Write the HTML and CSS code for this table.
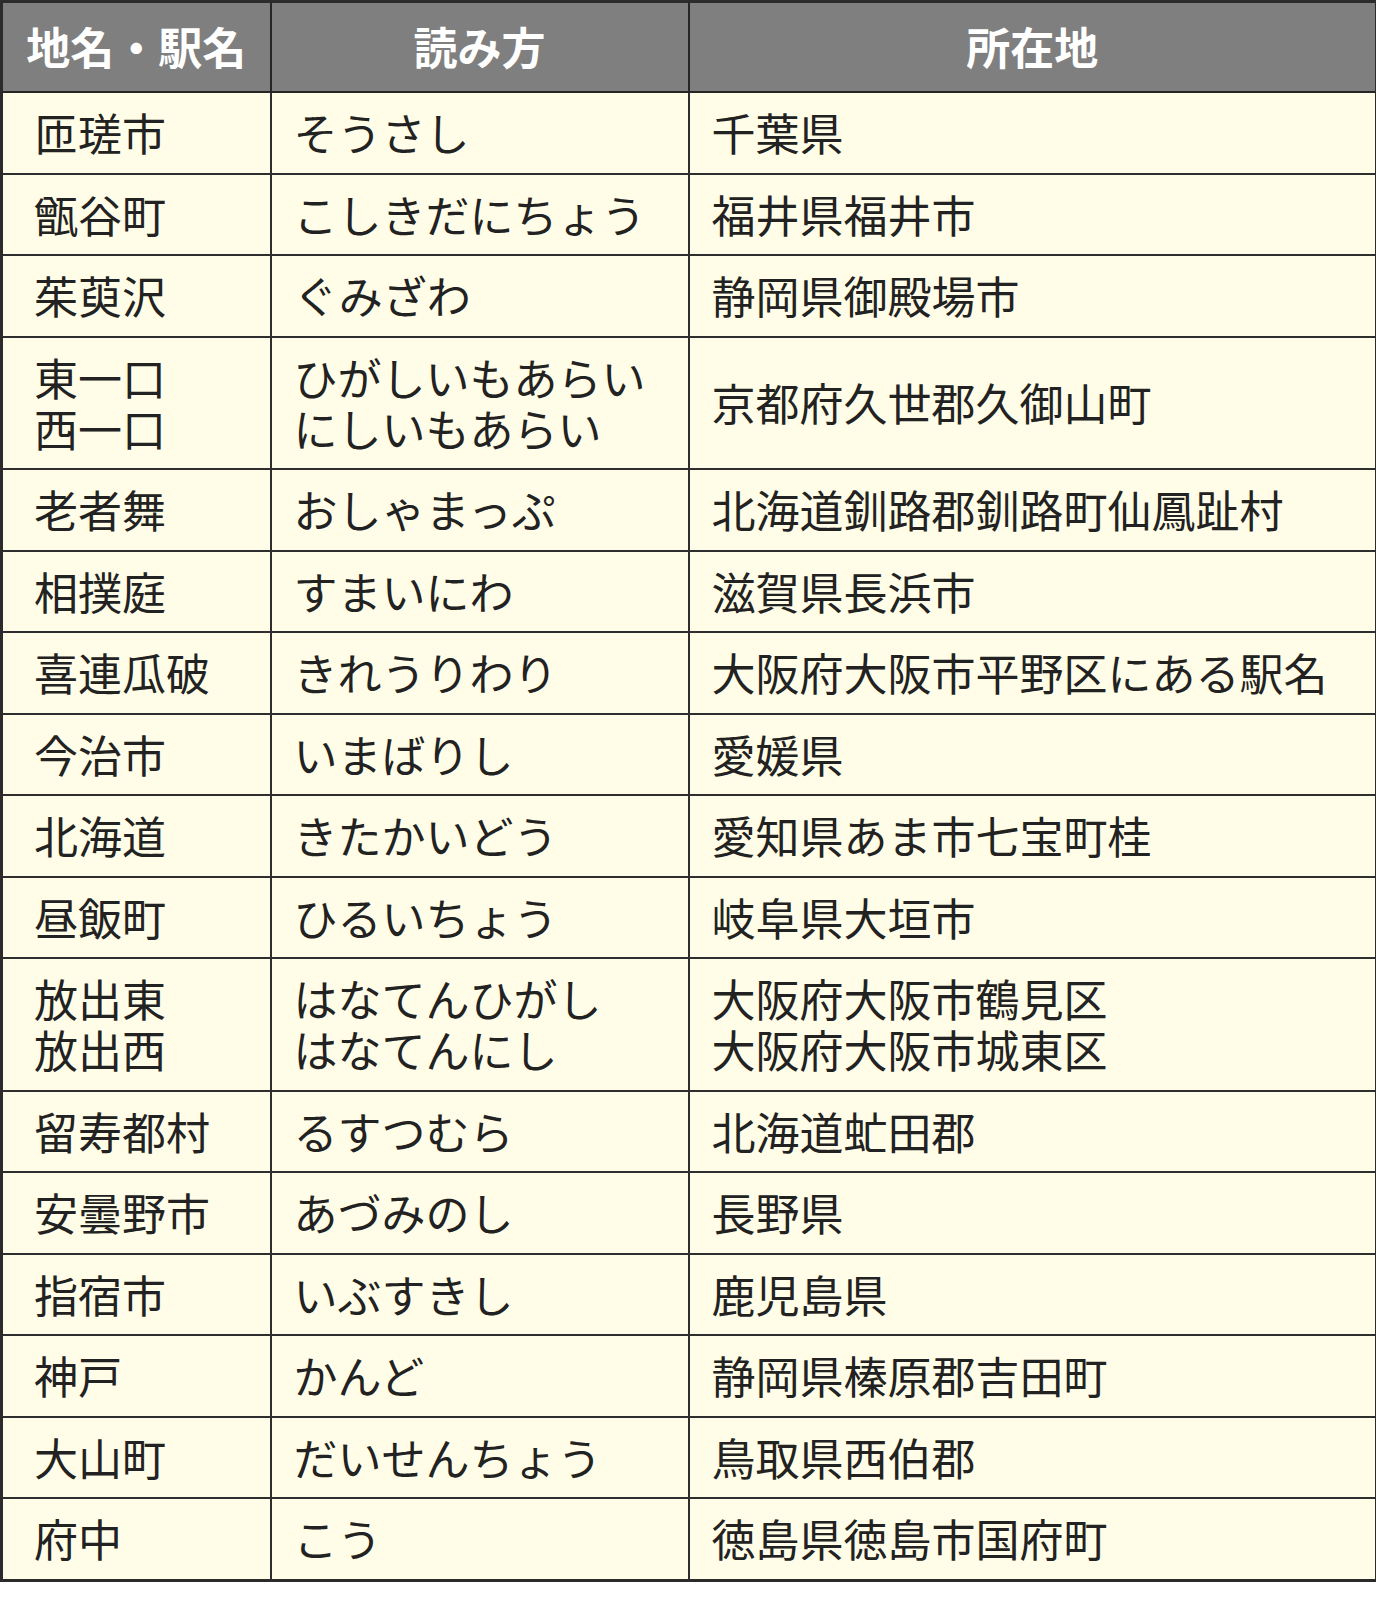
FILE: index.html
```html
<!DOCTYPE html>
<html lang="ja">
<head>
<meta charset="utf-8">
<title>難読地名</title>
<link rel="stylesheet" href="styles.css">
</head>
<body>
<table class="names">
  <colgroup>
    <col class="c-name">
    <col class="c-read">
    <col class="c-place">
  </colgroup>
  <thead>
    <tr><th>地名・駅名</th><th>読み方</th><th>所在地</th></tr>
  </thead>
  <tbody>
    <tr><td class="first">匝瑳市</td><td>そうさし</td><td>千葉県</td></tr>
    <tr><td class="first">甑谷町</td><td>こしきだにちょう</td><td>福井県福井市</td></tr>
    <tr><td class="first">茱萸沢</td><td>ぐみざわ</td><td>静岡県御殿場市</td></tr>
    <tr><td class="first">東一口<br>西一口</td><td>ひがしいもあらい<br>にしいもあらい</td><td>京都府久世郡久御山町</td></tr>
    <tr><td class="first">老者舞</td><td>おしゃまっぷ</td><td>北海道釧路郡釧路町仙鳳趾村</td></tr>
    <tr><td class="first">相撲庭</td><td>すまいにわ</td><td>滋賀県長浜市</td></tr>
    <tr><td class="first">喜連瓜破</td><td>きれうりわり</td><td>大阪府大阪市平野区にある駅名</td></tr>
    <tr><td class="first">今治市</td><td>いまばりし</td><td>愛媛県</td></tr>
    <tr><td class="first">北海道</td><td>きたかいどう</td><td>愛知県あま市七宝町桂</td></tr>
    <tr><td class="first">昼飯町</td><td>ひるいちょう</td><td>岐阜県大垣市</td></tr>
    <tr><td class="first">放出東<br>放出西</td><td>はなてんひがし<br>はなてんにし</td><td>大阪府大阪市鶴見区<br>大阪府大阪市城東区</td></tr>
    <tr><td class="first">留寿都村</td><td>るすつむら</td><td>北海道虻田郡</td></tr>
    <tr><td class="first">安曇野市</td><td>あづみのし</td><td>長野県</td></tr>
    <tr><td class="first">指宿市</td><td>いぶすきし</td><td>鹿児島県</td></tr>
    <tr><td class="first">神戸</td><td>かんど</td><td>静岡県榛原郡吉田町</td></tr>
    <tr><td class="first">大山町</td><td>だいせんちょう</td><td>鳥取県西伯郡</td></tr>
    <tr><td class="first">府中</td><td>こう</td><td>徳島県徳島市国府町</td></tr>
  </tbody>
</table>
</body>
</html>
```

FILE: styles.css
```css
html, body {
  margin: 0;
  padding: 0;
  background: #ffffff;
}

body {
  font-family: "Noto Sans CJK JP", "Noto Sans", sans-serif;
  color: #222222;
}

.names {
  border-collapse: collapse;
  width: 1375px;
  table-layout: fixed;
  border: 3px solid #2b2b2b;
}

.c-name { width: 269px; }
.c-read { width: 418px; }
.c-place { width: 688px; }

.names th {
  background: #7f7f7f;
  color: #ffffff;
  font-weight: 700;
  font-size: 44px;
  line-height: 50px;
  height: 85px;
  padding: 0 0 3px 0;
  text-align: center;
  vertical-align: middle;
  border: 2px solid #262626;
  border-top: 3px solid #2b2b2b;
}

.names td {
  background: #fffde7;
  font-size: 44px;
  font-weight: 400;
  line-height: 51px;
  padding: 14px 10px 14.5px 22px;
  text-align: left;
  vertical-align: middle;
  border: 2px solid #2e2e2e;
  white-space: nowrap;
}

.names td.first {
  padding-left: 31px;
}
```
